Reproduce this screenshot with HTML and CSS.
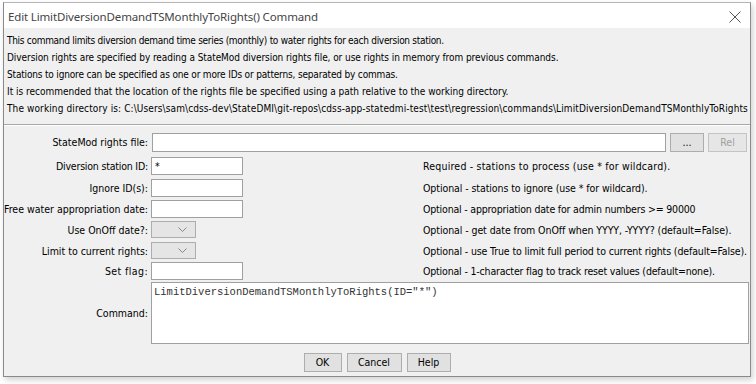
FILE: index.html
```html
<!DOCTYPE html>
<html>
<head>
<meta charset="utf-8">
<link rel="stylesheet" href="styles.css">
</head>
<body>
<div class="window">
  <div class="titlebar">
    <span class="title">Edit LimitDiversionDemandTSMonthlyToRights() Command</span>
    <svg class="close" width="12" height="12" viewBox="0 0 12 12"><path d="M0.5 0.5 L11.5 11.5 M11.5 0.5 L0.5 11.5" stroke="#555" stroke-width="1" fill="none"/></svg>
  </div>
  <div class="content">
    <div class="intro">
      <div class="line l1">This command limits diversion demand time series (monthly) to water rights for each diversion station.</div>
      <div class="line l2">Diversion rights are specified by reading a StateMod diversion rights file, or use rights in memory from previous commands.</div>
      <div class="line l3">Stations to ignore can be specified as one or more IDs or patterns, separated by commas.</div>
      <div class="line l4">It is recommended that the location of the rights file be specified using a path relative to the working directory.</div>
      <div class="line wd">The working directory is: C:\Users\sam\cdss-dev\StateDMI\git-repos\cdss-app-statedmi-test\test\regression\commands\LimitDiversionDemandTSMonthlyToRights</div>
    </div>
    <div class="sep"></div>
    <div class="form">
      <div class="label r1">StateMod rights file:</div>
      <div class="filerow r1">
        <div class="input wide"></div>
        <div class="btn small">...</div>
        <div class="btn rel disabled">Rel</div>
      </div>

      <div class="label lb-div">Diversion station ID:</div>
      <div class="input">*</div>
      <div class="desc d1">Required - stations to process (use * for wildcard).</div>

      <div class="label">Ignore ID(s):</div>
      <div class="input"></div>
      <div class="desc d2">Optional - stations to ignore (use * for wildcard).</div>

      <div class="label">Free water appropriation date:</div>
      <div class="input"></div>
      <div class="desc d3">Optional - appropriation date for admin numbers &gt;= 90000</div>

      <div class="label">Use OnOff date?:</div>
      <div class="combo"><svg width="9" height="5" viewBox="0 0 9 5"><path d="M0.5 0.5 L4.5 4.5 L8.5 0.5" stroke="#888" fill="none"/></svg></div>
      <div class="desc d4">Optional - get date from OnOff when YYYY, -YYYY? (default=False).</div>

      <div class="label">Limit to current rights:</div>
      <div class="combo"><svg width="9" height="5" viewBox="0 0 9 5"><path d="M0.5 0.5 L4.5 4.5 L8.5 0.5" stroke="#888" fill="none"/></svg></div>
      <div class="desc d5">Optional - use True to limit full period to current rights (default=False).</div>

      <div class="label lb-flag">Set flag:</div>
      <div class="input"></div>
      <div class="desc d6">Optional - 1-character flag to track reset values (default=none).</div>

      <div class="label cmdlabel">Command:</div>
      <div class="command">LimitDiversionDemandTSMonthlyToRights(ID="*")</div>
    </div>
    <div class="buttons">
      <div class="btn ok">OK</div>
      <div class="btn cancel">Cancel</div>
      <div class="btn help">Help</div>
    </div>
  </div>
</div>
</body>
</html>
```

FILE: styles.css
```css
html, body {
  margin: 0;
  padding: 0;
  background: #ffffff;
}
body {
  width: 756px;
  height: 384px;
  overflow: hidden;
  font-family: "DejaVu Sans Condensed", "DejaVu Sans", sans-serif;
  font-size: 10.5px;
  color: #000;
}
.window {
  margin: 2px 0 0 3px;
  width: 748px;
  height: 375px;
  box-sizing: border-box;
  border: 1px solid #8a8a8a;
  border-top-color: #b5b5b5;
  background: #f0f0f0;
  box-shadow: 2px 3px 6px rgba(0,0,0,0.18);
  display: flex;
  flex-direction: column;
  overflow: hidden;
}
.titlebar {
  height: 25px;
  background: #ffffff;
  display: flex;
  align-items: center;
  justify-content: space-between;
  padding: 0 9px 0 4px;
  flex: none;
}
.title {
  font-family: "Noto Sans", "Open Sans", sans-serif;
  font-size: 11.5px;
  letter-spacing: -0.15px;
  color: #444;
  padding-top: 1px;
}
.close {
  display: block;
  margin-top: 2px;
}
.content {
  flex: 1;
  display: flex;
  flex-direction: column;
  min-width: 0;
}
.intro {
  padding: 4px 0 0 3px;
  font-size: 10px;
}
.line {
  height: 17px;
  line-height: 17px;
  white-space: nowrap;
}
.line.l1 { letter-spacing: -0.29px; }
.line.l2 { letter-spacing: -0.07px; }
.line.l3 { letter-spacing: -0.17px; }
.line.l4 { letter-spacing: 0; }
.line.wd { letter-spacing: 0.11px; }
.sep {
  margin: 7px 0 0 0;
  height: 1px;
  background: #a8a8a8;
  border-bottom: 1px solid #ffffff;
}
.form {
  display: grid;
  grid-template-columns: 144px 92px 174px minmax(0, 1fr);
  grid-template-rows: 21px 19px 18px 18px 18px 17px 17px 62px;
  column-gap: 3px;
  row-gap: 3px;
  padding-top: 7px;
}
.form > * {
  align-self: start;
}
.label {
  grid-column: 1;
  text-align: right;
  line-height: 18px;
  white-space: nowrap;
}
.label.r1 {
  line-height: 19px;
}
.label.lb-div { letter-spacing: -0.2px; }
.label.lb-flag { letter-spacing: 0.4px; }
.filerow {
  grid-column: 2 / 5;
  display: flex;
  gap: 4px;
  margin-right: 3px;
  height: 19px;
  min-width: 0;
}
.input {
  grid-column: 2;
  background: #fff;
  border: 1px solid #a0a0a0;
  box-sizing: border-box;
  height: 18px;
  line-height: 16px;
  padding-left: 3px;
}
.input.wide {
  flex: 1;
  height: 19px;
  margin-left: 1px;
  min-width: 0;
}
.combo {
  grid-column: 2;
  width: 45px;
  height: 17px;
  box-sizing: border-box;
  background: #e5e5e5;
  border: 1px solid #adadad;
  display: flex;
  align-items: center;
  justify-content: flex-end;
  padding-right: 8px;
}
.combo svg { display: block; }
.desc {
  grid-column: 4;
  line-height: 18px;
  white-space: nowrap;
}
.desc.d1 { letter-spacing: 0.2px; }
.desc.d2 { letter-spacing: -0.08px; }
.desc.d3 { letter-spacing: -0.18px; }
.desc.d4 { letter-spacing: -0.08px; }
.desc.d5 { letter-spacing: -0.13px; }
.desc.d6 { letter-spacing: -0.17px; }
.cmdlabel {
  align-self: center;
}
.command {
  grid-column: 2 / 5;
  height: 62px;
  margin-right: 1px;
  background: #fff;
  border: 1px solid #a0a0a0;
  box-sizing: border-box;
  font-family: "Liberation Mono", "Courier New", monospace;
  font-size: 10.5px;
  color: #333;
  padding: 3px 2px 2px 2px;
  white-space: pre;
}
.btn {
  box-sizing: border-box;
  height: 19px;
  background: #e1e1e1;
  border: 1px solid #adadad;
  text-align: center;
  line-height: 17px;
  flex: none;
}
.btn.small { width: 34px; }
.btn.rel { width: 39px; }
.btn.disabled {
  color: #a0a0a0;
  background: #e6e6e6;
  border-color: #c4c4c4;
}
.buttons {
  display: flex;
  justify-content: center;
  gap: 5px;
  padding-top: 9px;
}
.btn.ok { width: 38px; }
.btn.cancel { width: 55px; }
.btn.help { width: 44px; }
```
